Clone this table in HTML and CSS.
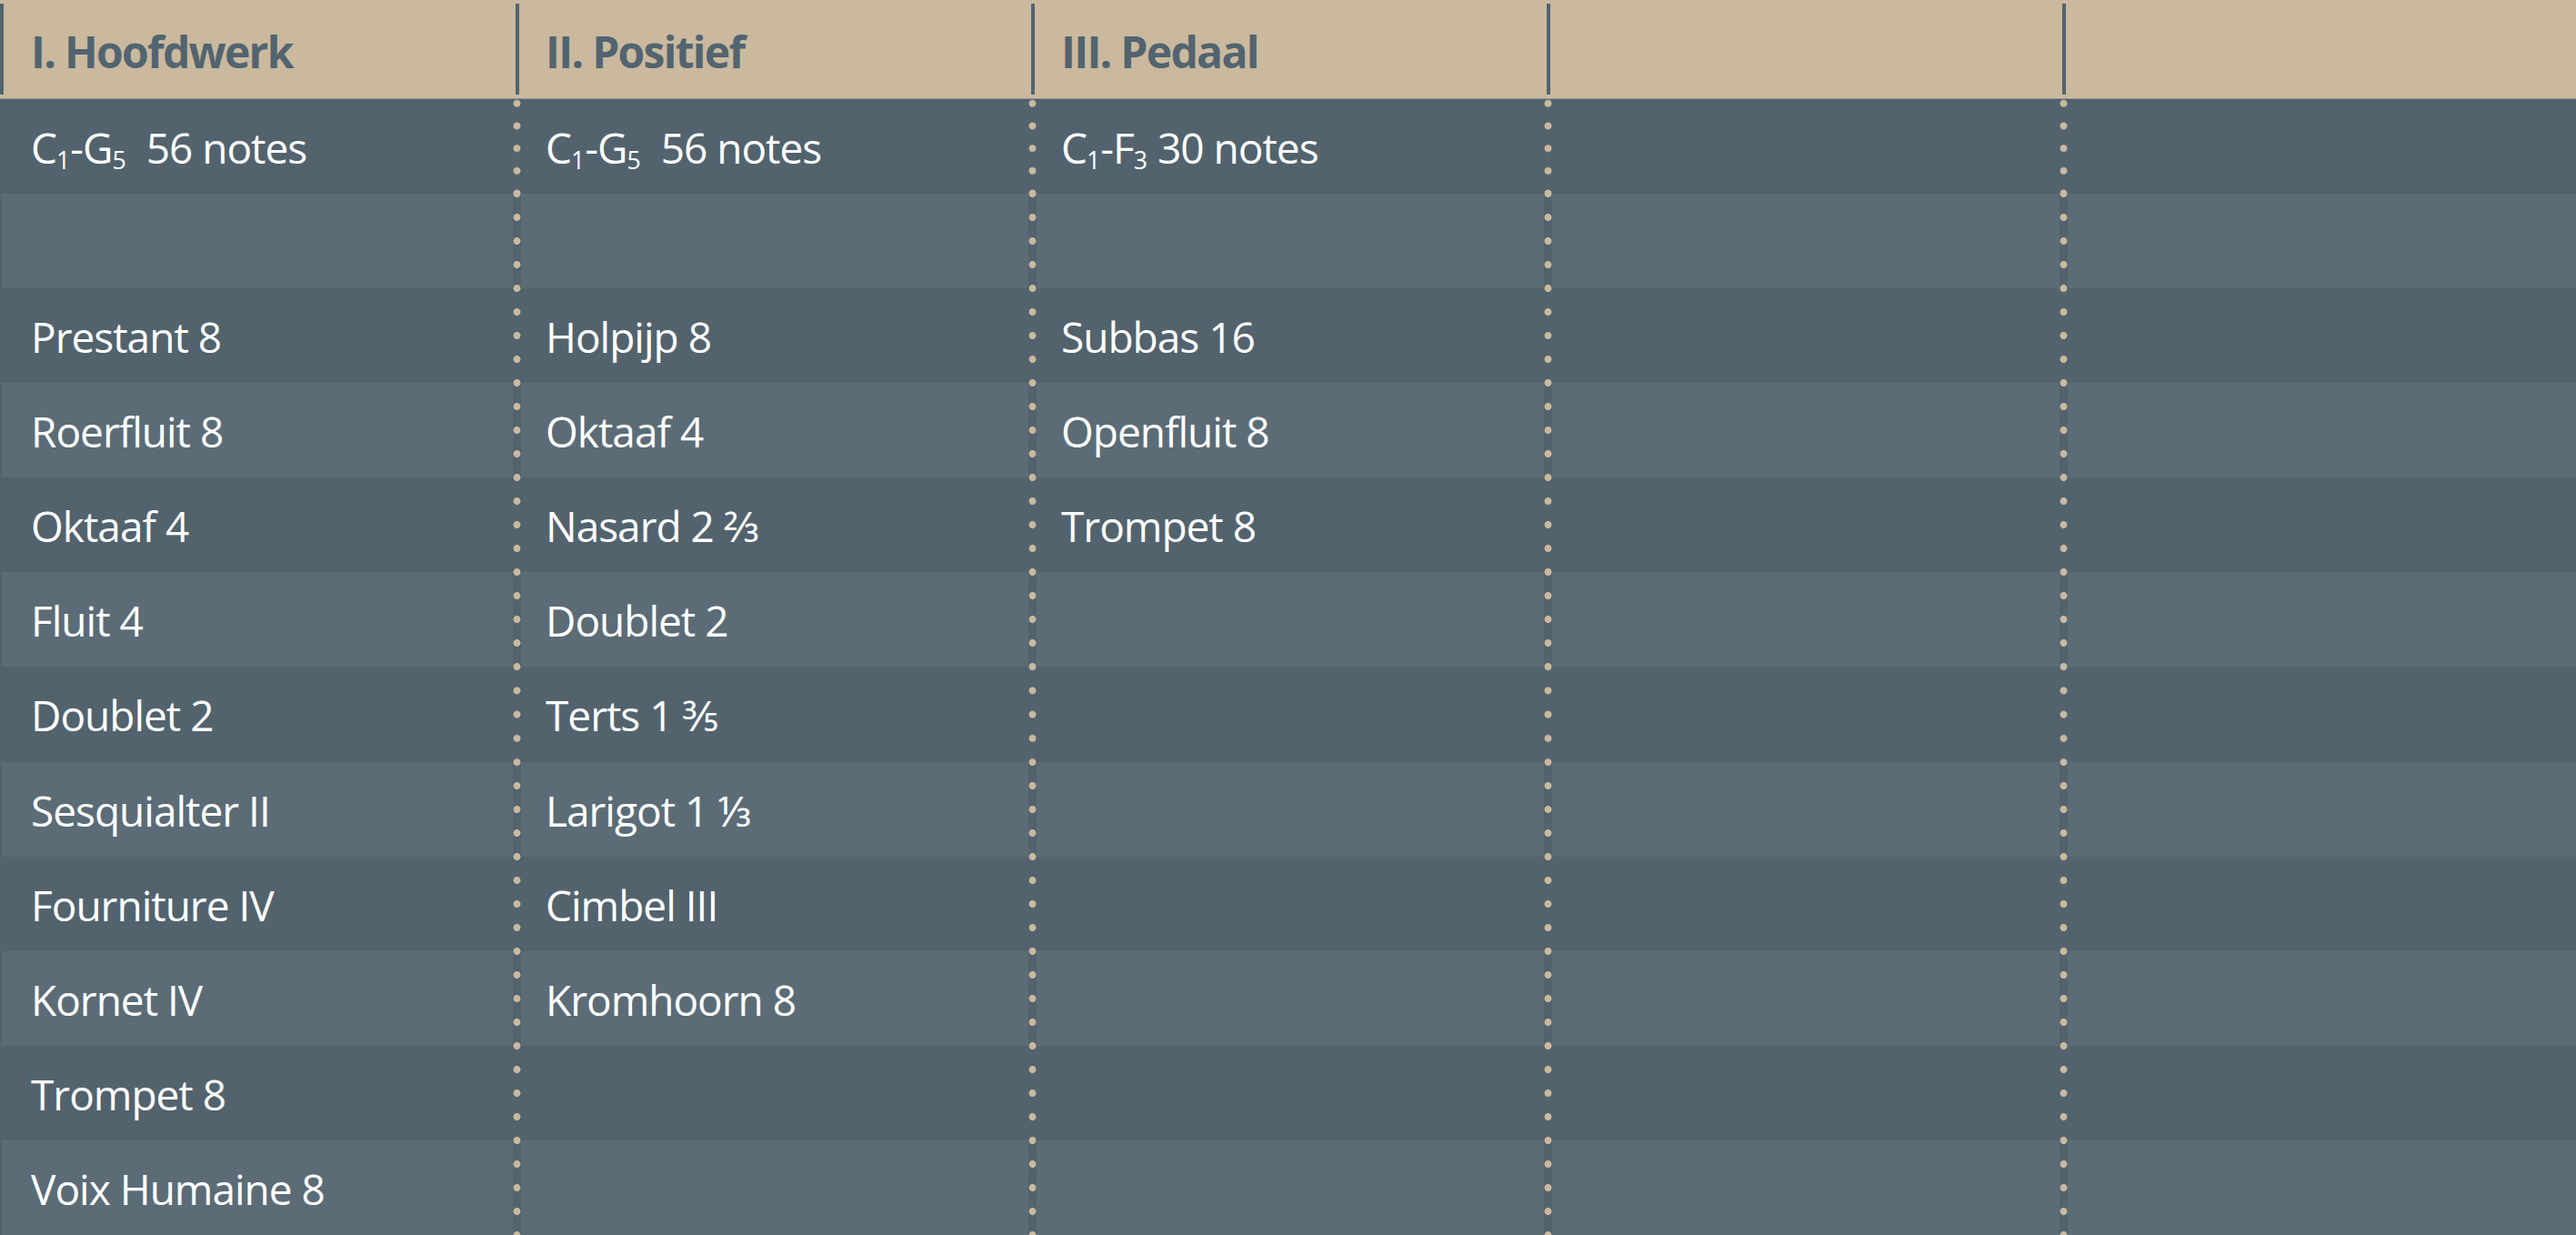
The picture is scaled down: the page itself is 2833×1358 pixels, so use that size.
FILE: index.html
```html
<!DOCTYPE html>
<html lang="nl">
<head>
<meta charset="utf-8">
<title>Dispositie</title>
<link rel="stylesheet" href="styles.css">
</head>
<body>
<div class="board">
  <div class="head">
    <div class="hcell first">I. Hoofdwerk</div>
    <div class="hcell">II. Positief</div>
    <div class="hcell">III. Pedaal</div>
    <div class="hcell"></div>
    <div class="hcell"></div>
  </div>
  <div class="rows">
    <div class="row dark top">
      <div class="cell first">C<sub>1</sub>-G<sub>5</sub>&nbsp; 56 notes</div>
      <div class="cell">C<sub>1</sub>-G<sub>5</sub>&nbsp; 56 notes</div>
      <div class="cell">C<sub>1</sub>-F<sub>3</sub> 30 notes</div>
      <div class="cell"></div>
      <div class="cell"></div>
    </div>
    <div class="row light">
      <div class="cell first"></div>
      <div class="cell"></div>
      <div class="cell"></div>
      <div class="cell"></div>
      <div class="cell"></div>
    </div>
    <div class="row dark">
      <div class="cell first">Prestant 8</div>
      <div class="cell">Holpijp 8</div>
      <div class="cell">Subbas 16</div>
      <div class="cell"></div>
      <div class="cell"></div>
    </div>
    <div class="row light">
      <div class="cell first">Roerfluit 8</div>
      <div class="cell">Oktaaf 4</div>
      <div class="cell">Openfluit 8</div>
      <div class="cell"></div>
      <div class="cell"></div>
    </div>
    <div class="row dark">
      <div class="cell first">Oktaaf 4</div>
      <div class="cell">Nasard 2 ⅔</div>
      <div class="cell">Trompet 8</div>
      <div class="cell"></div>
      <div class="cell"></div>
    </div>
    <div class="row light">
      <div class="cell first">Fluit 4</div>
      <div class="cell">Doublet 2</div>
      <div class="cell"></div>
      <div class="cell"></div>
      <div class="cell"></div>
    </div>
    <div class="row dark">
      <div class="cell first">Doublet 2</div>
      <div class="cell">Terts 1 ⅗</div>
      <div class="cell"></div>
      <div class="cell"></div>
      <div class="cell"></div>
    </div>
    <div class="row light">
      <div class="cell first">Sesquialter II</div>
      <div class="cell">Larigot 1 ⅓</div>
      <div class="cell"></div>
      <div class="cell"></div>
      <div class="cell"></div>
    </div>
    <div class="row dark">
      <div class="cell first">Fourniture IV</div>
      <div class="cell">Cimbel III</div>
      <div class="cell"></div>
      <div class="cell"></div>
      <div class="cell"></div>
    </div>
    <div class="row light">
      <div class="cell first">Kornet IV</div>
      <div class="cell">Kromhoorn 8</div>
      <div class="cell"></div>
      <div class="cell"></div>
      <div class="cell"></div>
    </div>
    <div class="row dark">
      <div class="cell first">Trompet 8</div>
      <div class="cell"></div>
      <div class="cell"></div>
      <div class="cell"></div>
      <div class="cell"></div>
    </div>
    <div class="row light">
      <div class="cell first">Voix Humaine 8</div>
      <div class="cell"></div>
      <div class="cell"></div>
      <div class="cell"></div>
      <div class="cell"></div>
    </div>
  </div>
</div>
</body>
</html>
```
FILE: styles.css
```css
html, body {
  margin: 0;
  height: 100%;
}
body {
  font-family: "Open Sans", "Noto Sans", sans-serif;
  background: #52636e;
  overflow: hidden;
}
.board {
  display: flex;
  flex-direction: column;
  height: 100vh;
}
.head {
  display: grid;
  grid-template-columns: 564px repeat(3, 567px) 1fr;
  height: 108px;
  background: #cab99e;
  border-bottom: 1px solid #939897;
}
.hcell {
  padding: 33px 0 0 36px;
  font-size: 48px;
  line-height: 48px;
  font-weight: 700;
  letter-spacing: -1.7px;
  color: #52646f;
  white-space: nowrap;
  background-image: linear-gradient(#52646f, #52646f);
  background-size: 4px 100px;
  background-position: 3px 4px;
  background-repeat: no-repeat;
}
.hcell.first {
  padding-left: 34px;
  background-position: 0 4px;
}
.rows {
  flex: 1;
  display: flex;
  flex-direction: column;
}
.row {
  flex: 1;
  display: grid;
  grid-template-columns: 564px repeat(3, 567px) 1fr;
}
.row.dark {
  background: #52636e;
}
.row.light {
  background: #5b6c77;
}
.cell {
  padding: 30px 0 0 36px;
  color: #ffffff;
  font-size: 46px;
  line-height: 46px;
  letter-spacing: -1px;
  white-space: nowrap;
  background-image:
    radial-gradient(circle, #cbb99d 3.6px, rgba(203, 185, 157, 0) 4.3px),
    linear-gradient(#52636e, #52636e);
  background-size: 9px 25%, 9px 100%;
  background-position: 0 -13px, 0 0;
  background-repeat: repeat-y, no-repeat;
}
.row.top .cell {
  background-size: 9px 24.7px, 9px 100%;
  background-position: 0 -7.6px, 0 0;
}
.cell.first,
.row.top .cell.first {
  padding-left: 34px;
  background-image: linear-gradient(#52636e, #52636e);
  background-size: 2px 100%;
  background-position: 0 0;
  background-repeat: no-repeat;
}
sub {
  font-size: 0.58em;
  line-height: 0;
  vertical-align: -0.22em;
  letter-spacing: 0;
}
```
